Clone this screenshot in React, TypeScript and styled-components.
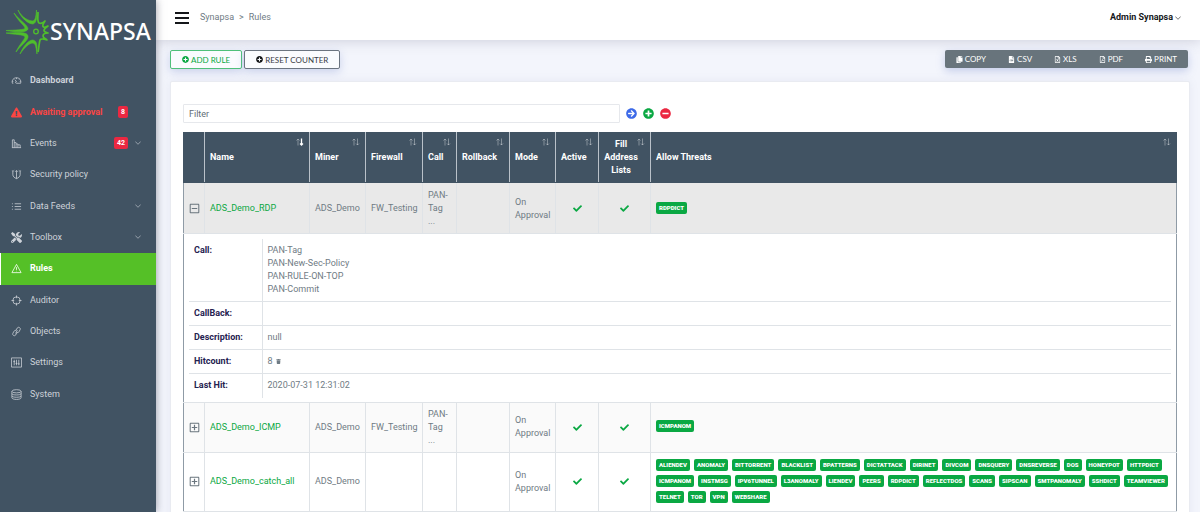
import React from 'react';
import styled, { createGlobalStyle, css } from 'styled-components';
import {
  FaPlusCircle, FaMinusCircle, FaArrowCircleRight, FaCopy, FaFileCsv, FaRegFileExcel, FaRegFilePdf,
  FaPrint, FaCheck, FaExclamationTriangle, FaTrash, FaTools, FaRegPlusSquare, FaRegMinusSquare,
} from 'react-icons/fa';

const c = {
  slate: '#415363', green: '#0aa843', lime: '#55c027', red: '#eb2841', blue: '#3d6ae8',
  muted: '#6f7b84', line: '#dfe3e7', navy: '#252250', frame: '#8f9ba6',
};

const Global = createGlobalStyle`
  * { box-sizing: border-box; }
  html, body, #root { height: 100%; }
  body { margin: 0; font: 9px/13px Roboto, "Liberation Sans", sans-serif; color: ${c.muted}; background: #f3f5fc; }
  button, input { font: inherit; color: inherit; }
  button { cursor: pointer; }
  a { color: inherit; text-decoration: none; }
  svg { display: block; flex: none; }
`;

const Shell = styled.div`
  display: grid;
  grid-template-columns: 156px minmax(0, 1fr);
  height: 100vh;
  overflow: hidden;
`;

const Sidebar = styled.aside`
  background: ${c.slate};
  color: #cdd2d9;
  box-shadow: 0 0 8px rgba(60, 60, 80, 0.5);
  z-index: 2;
`;

const Brand = styled.a`
  display: flex;
  align-items: center;
  height: 65px;
  padding: 0 0 4px 4px;
  color: #fff;
  font: 500 23px/30px "Noto Sans", "Open Sans", sans-serif;
`;

const Menu = styled.ul`
  list-style: none;
  margin: 0;
  padding: 0;
  display: grid;
  grid-auto-rows: 1fr;
  min-height: 345px;
`;

const MenuLink = styled.a<{ $active?: boolean; $alert?: boolean; $strong?: boolean }>`
  display: flex;
  align-items: center;
  height: 100%;
  padding: 0 15px 0 11px;
  gap: 8px;
  font-weight: ${p => (p.$strong || p.$alert || p.$active ? 700 : 400)};
  ${p => p.$alert && css`color: #fb4543;`}
  ${p => p.$active && css`background: ${c.lime}; color: #fff; box-shadow: inset 1px 0 #fff;`}
`;

const MenuLabel = styled.span`
  flex: 1;
  white-space: nowrap;
`;

const Count = styled.span<{ $wide?: boolean }>`
  padding: 0 3px;
  line-height: 12px;
  border-radius: 2px;
  background: ${c.red};
  color: #fff;
  font-size: 7px;
  font-weight: 700;
  margin-right: ${p => (p.$wide ? '-1px' : '13px')};
`;

const Page = styled.div`
  display: flex;
  flex-direction: column;
  min-width: 0;
  height: 100vh;
`;

const TopBar = styled.header`
  display: flex;
  align-items: center;
  flex: none;
  height: 40px;
  padding: 0 19px 5px;
  background: #fff;
  box-shadow: 0 1px 12px rgba(90, 90, 120, 0.25);
`;

const Burger = styled.button`
  display: grid;
  gap: 3px;
  width: 14px;
  padding: 0;
  border: 0;
  background: none;
  i { height: 2px; background: #15171a; }
`;

const Crumbs = styled.nav`
  display: flex;
  gap: 5px;
  margin-left: 11px;
  flex: 1;
`;

const UserButton = styled.button`
  display: flex;
  align-items: center;
  gap: 2px;
  padding: 0;
  border: 0;
  background: none;
  color: #15171a;
  font-weight: 700;
`;

const Main = styled.main`
  flex: 1;
  min-height: 0;
  overflow: auto;
  scrollbar-width: none;
  padding: 10px 10px 10px 14px;
`;

const Toolbar = styled.div`
  display: flex;
  align-items: flex-start;
  gap: 2px;
  padding-right: 2px;
`;

const ActionButton = styled.button<{ $tone: string; $ink: string }>`
  display: flex;
  align-items: center;
  justify-content: center;
  gap: 2px;
  height: 19px;
  padding: 0 11px;
  border: 1px solid ${p => p.$tone};
  border-radius: 2px;
  background: #fafbfe;
  color: ${p => p.$ink};
  font: 8px/12px Lato, Inter, sans-serif;
  white-space: nowrap;
  box-shadow: 0 3px 8px rgba(110, 130, 200, 0.3);
`;

const ExportGroup = styled.div`
  display: flex;
  height: 18px;
  margin-left: auto;
  border-radius: 2px;
  background: #68747c;
  box-shadow: 0 3px 8px rgba(110, 130, 200, 0.35);
`;

const ExportButton = styled.button`
  display: flex;
  align-items: center;
  gap: 2px;
  padding: 0 11px;
  border: 0;
  background: none;
  color: #fff;
  font: 8px/12px Lato, Inter, sans-serif;
`;

const Card = styled.section`
  margin-top: 12px;
  min-height: 100%;
  padding: 22px 12px 12px;
  background: #fff;
  border: 1px solid #e9ebf1;
  border-radius: 2px;
  box-shadow: 0 0 8px rgba(120, 130, 170, 0.1);
`;

const FilterRow = styled.div`
  display: flex;
  align-items: center;
  gap: 6px;
  margin-bottom: 9px;
`;

const FilterInput = styled.input`
  width: 44%;
  height: 19px;
  padding: 0 5px;
  border: 1px solid #e6e8ec;
  border-radius: 1px;
  background: #fff;
  &::placeholder { color: #616c75; opacity: 1; }
`;

const RoundButton = styled.button<{ $tone: string }>`
  padding: 0;
  border: 0;
  border-radius: 50%;
  background: none;
  color: ${p => p.$tone};
`;

const RulesTable = styled.table`
  width: 100%;
  table-layout: fixed;
  border-collapse: collapse;
  border: 1px solid ${c.frame};
`;

const HeadCell = styled.th<{ $center?: boolean }>`
  position: relative;
  padding: 5px;
  background: ${c.slate};
  border: 1px solid #b9c1c9;
  border-top-color: ${c.slate};
  border-bottom-color: ${c.slate};
  color: #fff;
  text-align: ${p => (p.$center ? 'center' : 'left')};
  ${p => p.$center && css`padding-right: 12px;`}
  &:first-child { border-left-color: ${c.slate}; }
  &:last-child { border-right-color: ${c.slate}; }
`;

const SortMark = styled.span`
  position: absolute;
  top: 5px;
  right: 5px;
`;

const Cell = styled.td`
  padding: 5px;
  border: 1px solid ${c.line};
  vertical-align: middle;
  &:first-child { border-left-color: ${c.frame}; }
  &:last-child { border-right-color: ${c.frame}; }
  > svg { margin: 0 auto; }
`;

const Row = styled.tr<{ $tone: string; $open?: boolean }>`
  background: ${p => p.$tone};
  ${p => p.$open && css`${Cell} { padding-top: 6px; }`}
`;

const DetailCell = styled(Cell)`
  padding-bottom: 4px;
`;

const RuleLink = styled.a`
  color: ${c.green};
`;

const Toggle = styled.button`
  display: block;
  margin: 0 auto;
  padding: 0;
  border: 0;
  background: none;
  color: #6a757e;
`;

const Tags = styled.div`
  display: flex;
  flex-wrap: wrap;
  gap: 4px;
  margin: 1px 0 3px;
`;

const Tag = styled.span`
  padding: 0 3px;
  border-radius: 2px;
  background: ${c.green};
  color: #fff;
  font-size: 6px;
  line-height: 12px;
  font-weight: 900;
`;

const DetailTable = styled.table`
  width: 100%;
  border-collapse: collapse;
  th, td { padding: 5px; text-align: left; vertical-align: top; border-bottom: 1px solid ${c.line}; height: 24px; }
  th { width: 73px; color: ${c.navy}; border-right: 1px solid ${c.line}; }
  tr:last-child > * { border-bottom: 0; }
`;

const Inline = styled.span`
  display: flex;
  align-items: center;
  gap: 3px;
`;

const Logo = () => (
  <svg width="46" height="52" viewBox="3 4 46 52" fill="#4fbf2b" stroke="#4fbf2b" strokeWidth="0.600" strokeLinejoin="round">
    <path d="M17 9C20 17 27 23 32 23C36 22 36 15 35.500 9C35 15 34.500 19 32 20C28 20 21 17 17 9Z" />
    <path d="M13 12C17 20 23 24 24 27C24 29 14 29 5 29.500C14 31 26 32 27 28C27 24 19 20 13 12Z" />
    <path d="M5 32C14 32 26 30 27 35C28 39 20 44 15 51C18 44 24 38 24 36C23 33 14 34 5 32Z" />
    <path d="M19 53C22 46 27 39 32 39C37 40 36 47 36 53C35 47 35 43 32 42C28 42 24 46 19 53Z" />
    <path fill="none" strokeWidth="1.700" d="M37 11C37 17 36 20 38 22C40 23 42 22 44 20C42 23 41 25 42.500 26C44 27 45 25.500 47 25C44 27 43 28 43 29.500C43 31 45 31.500 47 32C44 32 42 33 42 35C42 37 45 38 46 39C43 38 40 37 39 39C38 42 38 47 37 51" />
    <circle cx="35" cy="30.500" r="2.300" fill="none" strokeWidth="1.300" />
  </svg>
);

const icons: Record<string, React.ReactNode> = {
  gauge: <path d="M5 18H3C1 11 6 6 12 6s11 5 9 12h-9M12 18a2 2 0 1 1 0-4M12 14l-4-4M12 6v3M3 14h2M19 14h2M18 9l-1 1" />,
  bars: <path d="M2 21h20M3 21V4h4v17M7 10h4v11M11 13h4v8M15 15h5v6" />,
  shield: <path d="M2 4c3 1 4 0 5-1M22 4c-3 1-4 0-5-1M4 5v7c0 4 3 7 8 9 5-2 8-5 8-9V5M12 4v17M9 6l3-3 3 3" />,
  list: <path d="M2 6h2M2 12h2M2 18h2M8 6h14M8 12h14M8 18h14" />,
  alert: <path d="M12 3 2 21h20zM12 9v6M12 17v1" />,
  target: <><circle cx="12" cy="12" r="8" /><path d="M12 1v6M12 17v6M1 12h6M17 12h6" /></>,
  link: <path d="M11 9l3-5c2-3 8 0 6 4l-3 5c-1 2-4 2-5 0M13 14l-3 6c-2 3-8 0-6-4l3-5c1-2 4-2 5 0M14 9l-4 7" />,
  sliders: <path d="M1 2h22v20H1zM7 6v12M12 6v12M17 6v12M5 10h4M10 14h4M15 15h4" />,
  stack: <><ellipse cx="12" cy="5" rx="10" ry="3.500" /><path d="M2 5v14c0 5 20 5 20 0V5M2 10c0 4 20 4 20 0M2 15c0 4 20 4 20 0" /></>,
};

const LineIcon = ({ name }: { name: string }) => (
  <svg width="11" height="11" viewBox="0 0 24 24" fill="none" stroke="currentColor" strokeWidth="1.700">{icons[name]}</svg>
);

const Chevron = () => (
  <svg width="6" height="6" viewBox="0 0 6 6" fill="none" stroke="currentColor" strokeWidth="0.600"><path d="M.3 1.500 3 4.300 5.700 1.500" /></svg>
);

const Sort = ({ sorted }: { sorted?: boolean }) => (
  <SortMark>
    <svg width="8" height="8" viewBox="0 0 8 8" fill="none" stroke="#fff" strokeWidth="0.900">
      <path opacity="0.4" d="M2 7.500V1M.5 2.500 2 1l1.500 1.500" />
      <path opacity={sorted ? 1 : 0.4} strokeWidth={sorted ? 1.300 : 0.900} d="M5.500 .5V7M4 5.500 5.500 7 7 5.500" />
    </svg>
  </SortMark>
);

type Item = { label: string; icon: string; count?: number; sub?: boolean; alert?: boolean; active?: boolean; strong?: boolean };
const menu: Item[] = [
  { label: 'Dashboard', icon: 'gauge', strong: true },
  { label: 'Awaiting approval', icon: 'warning', count: 8, alert: true },
  { label: 'Events', icon: 'bars', count: 42, sub: true },
  { label: 'Security policy', icon: 'shield' },
  { label: 'Data Feeds', icon: 'list', sub: true },
  { label: 'Toolbox', icon: 'tools', sub: true },
  { label: 'Rules', icon: 'alert', active: true },
  { label: 'Auditor', icon: 'target' },
  { label: 'Objects', icon: 'link' },
  { label: 'Settings', icon: 'sliders' },
  { label: 'System', icon: 'stack' },
];

const widths = [21, 105, 56, 57, 34, 53, 46, 43, 52];
const heads = ['Name', 'Miner', 'Firewall', 'Call', 'Rollback', 'Mode', 'Active', 'Fill Address Lists', 'Allow Threats'];

type Rule = { name: string; firewall?: string; call?: boolean; open?: boolean; tone: string; threats: string[] };
const rules: Rule[] = [
  { name: 'ADS_Demo_RDP', firewall: 'FW_Testing', call: true, open: true, tone: '#e9e9e9', threats: ['RDPDICT'] },
  { name: 'ADS_Demo_ICMP', firewall: 'FW_Testing', call: true, tone: '#fafafa', threats: ['ICMPANOM'] },
  {
    name: 'ADS_Demo_catch_all', tone: '#fff',
    threats: ('ALIENDEV ANOMALY BITTORRENT BLACKLIST BPATTERNS DICTATTACK DIRINET DIVCOM DNSQUERY DNSREVERSE DOS HONEYPOT HTTPDICT '
      + 'ICMPANOM INSTMSG IPV6TUNNEL L3ANOMALY LIENDEV PEERS RDPDICT REFLECTDOS SCANS SIPSCAN SMTPANOMALY SSHDICT TEAMVIEWER '
      + 'TELNET TOR VPN WEBSHARE').split(' '),
  },
];

const Details = () => (
  <DetailTable>
    <tbody>
      <tr><th scope="row">Call:</th><td>PAN-Tag<br />PAN-New-Sec-Policy<br />PAN-RULE-ON-TOP<br />PAN-Commit</td></tr>
      <tr><th scope="row">CallBack:</th><td /></tr>
      <tr><th scope="row">Description:</th><td>null</td></tr>
      <tr><th scope="row">Hitcount:</th><td><Inline>8 <FaTrash size={5} /></Inline></td></tr>
      <tr><th scope="row">Last Hit:</th><td>2020-07-31 12:31:02</td></tr>
    </tbody>
  </DetailTable>
);

export default function App() {
  return (
    <Shell>
      <Global />
      <Sidebar>
        <Brand href="#"><Logo />SYNAPSA</Brand>
        <Menu>
          {menu.map(m => (
            <li key={m.label}>
              <MenuLink href="#" $active={m.active} $alert={m.alert} $strong={m.strong}>
                {m.icon === 'warning' ? <FaExclamationTriangle size={11} /> : m.icon === 'tools' ? <FaTools size={11} /> : <LineIcon name={m.icon} />}
                <MenuLabel>{m.label}</MenuLabel>
                {m.count && <Count $wide={m.sub}>{m.count}</Count>}
                {m.sub && <Chevron />}
              </MenuLink>
            </li>
          ))}
        </Menu>
      </Sidebar>
      <Page>
        <TopBar>
          <Burger aria-label="Toggle menu"><i /><i /><i /></Burger>
          <Crumbs aria-label="Breadcrumb"><a href="#">Synapsa</a><span>&gt;</span><a href="#">Rules</a></Crumbs>
          <UserButton>Admin Synapsa<Chevron /></UserButton>
        </TopBar>
        <Main>
          <Toolbar>
            <ActionButton $tone="#4fc07a" $ink={c.green}><FaPlusCircle size={7} />ADD RULE</ActionButton>
            <ActionButton $tone="#6b7480" $ink="#3a4046"><FaPlusCircle size={7} color="#15171a" />RESET COUNTER</ActionButton>
            <ExportGroup>
              <ExportButton><FaCopy size={7} />COPY</ExportButton>
              <ExportButton><FaFileCsv size={7} />CSV</ExportButton>
              <ExportButton><FaRegFileExcel size={7} />XLS</ExportButton>
              <ExportButton><FaRegFilePdf size={7} />PDF</ExportButton>
              <ExportButton><FaPrint size={7} />PRINT</ExportButton>
            </ExportGroup>
          </Toolbar>
          <Card>
            <FilterRow>
              <FilterInput placeholder="Filter" aria-label="Filter" />
              <RoundButton $tone={c.blue} aria-label="Apply filter"><FaArrowCircleRight size={11} /></RoundButton>
              <RoundButton $tone={c.green} aria-label="Add filter"><FaPlusCircle size={11} /></RoundButton>
              <RoundButton $tone={c.red} aria-label="Remove filter"><FaMinusCircle size={11} /></RoundButton>
            </FilterRow>
            <RulesTable>
              <colgroup>{widths.map((w, i) => <col key={i} width={w} />)}<col /></colgroup>
              <thead>
                <tr>
                  <HeadCell aria-label="Details" />
                  {heads.map((h, i) => <HeadCell key={h} $center={i === 7}>{h}<Sort sorted={i === 0} /></HeadCell>)}
                </tr>
              </thead>
              <tbody>
                {rules.map(r => (
                  <React.Fragment key={r.name}>
                    <Row $tone={r.tone} $open={r.open}>
                      <Cell><Toggle aria-label="Toggle details">{r.open ? <FaRegMinusSquare size={11} /> : <FaRegPlusSquare size={11} />}</Toggle></Cell>
                      <Cell><RuleLink href="#">{r.name}</RuleLink></Cell>
                      <Cell>ADS_Demo</Cell>
                      <Cell>{r.firewall}</Cell>
                      <Cell>{r.call && <>PAN-<br />Tag<br />...</>}</Cell>
                      <Cell />
                      <Cell>On Approval</Cell>
                      <Cell><FaCheck size={9} color={c.green} /></Cell>
                      <Cell><FaCheck size={9} color={c.green} /></Cell>
                      <Cell><Tags>{r.threats.map(t => <Tag key={t}>{t}</Tag>)}</Tags></Cell>
                    </Row>
                    {r.open && <Row $tone="#fff"><DetailCell colSpan={10}><Details /></DetailCell></Row>}
                  </React.Fragment>
                ))}
              </tbody>
            </RulesTable>
          </Card>
        </Main>
      </Page>
    </Shell>
  );
}
